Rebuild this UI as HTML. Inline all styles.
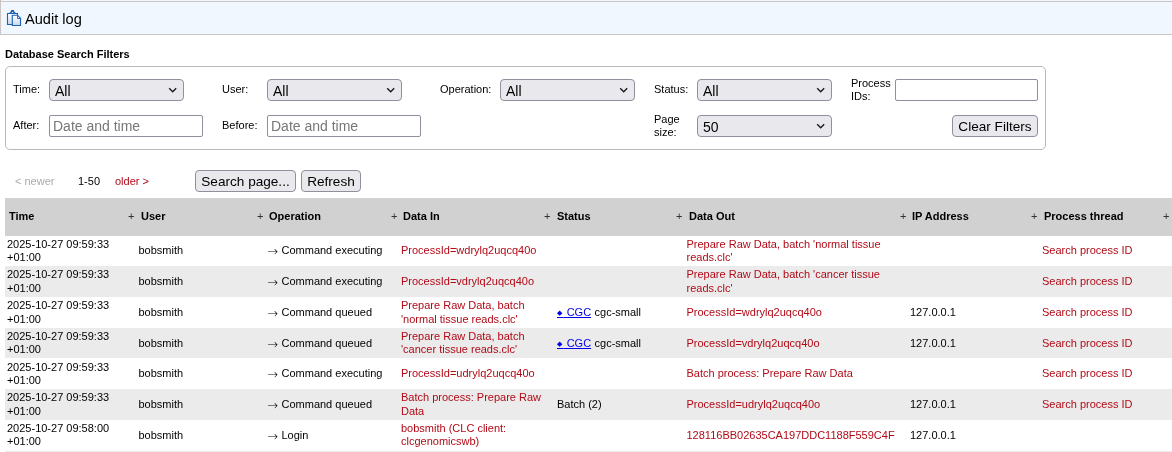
<!DOCTYPE html>
<html><head><meta charset="utf-8"><title>Audit log</title>
<style>
html,body{margin:0;padding:0;background:#fff;}
body{will-change:transform;width:1172px;height:452px;position:relative;overflow:hidden;font-family:"Liberation Sans",sans-serif;font-size:11px;color:#000;}
.abs{position:absolute;white-space:nowrap;}
#hdr0{position:absolute;left:0;top:0;width:1172px;height:2px;background:#f0f7fe;border-left:1px solid #bbb;box-sizing:border-box;}
#hdr{position:absolute;left:0;top:1px;width:1172px;height:32px;border:1px solid #cdc4c4;border-right:none;background:#f0f7fe;box-sizing:content-box;}
#title{left:25px;top:11px;font-size:14.6px;line-height:17px;}
#dsf{left:5px;top:48px;font-weight:bold;font-size:11px;line-height:13px;}
#fs{position:absolute;left:5px;top:66px;width:1041px;height:84px;border:1px solid #bababa;border-radius:5px;box-sizing:border-box;}
.lbl{position:absolute;font-size:11px;line-height:13px;}
.sel{position:absolute;height:22px;width:135px;box-sizing:border-box;border:1px solid #8f8f9d;border-radius:4px;background:#e9e9ed;font-size:14px;line-height:20px;padding-left:5px;padding-top:1px;}
.sel svg{position:absolute;right:5px;top:6.9px;}
.inp{position:absolute;height:22px;width:154px;box-sizing:border-box;border:1px solid #8f8f9d;border-radius:2px;background:#fff;font-size:14px;line-height:20px;padding-left:3px;color:#777;}
.btn{position:absolute;height:22px;box-sizing:border-box;border:1px solid #8f8f9d;border-radius:4px;background:#e9e9ed;font-size:13.6px;line-height:21px;text-align:center;}
#thead{position:absolute;left:5px;top:198px;width:1167px;height:38px;background:#d1d1d1;}
.th{position:absolute;top:210px;font-weight:bold;font-size:11px;line-height:13px;}
.plus{position:absolute;top:210px;font-size:11px;line-height:13px;color:#333;}
.row{position:absolute;left:5px;width:1167px;}
.g{background:#ebebeb;}
.c{position:absolute;font-size:11px;line-height:13px;white-space:nowrap;}
.r{color:#b10a17;}
.ar{font-family:"DejaVu Sans Light","DejaVu Sans",sans-serif;font-weight:200;font-size:13px;line-height:13px;display:inline-block;width:14.5px;vertical-align:top;position:relative;top:0.5px;}
a{color:#0000ee;margin-right:0.4px;text-decoration-skip-ink:none;}
.ic{font-family:"DejaVu Sans",sans-serif;font-size:7px;line-height:7px;letter-spacing:1.2px;vertical-align:0.7px;}
</style></head><body>
<div id="hdr0"></div><div id="hdr"></div>
<svg class="abs" style="left:0;top:0" width="30" height="30" viewBox="0 0 30 30">
<defs><linearGradient id="gr" x1="0" y1="0" x2="0" y2="1"><stop offset="0" stop-color="#ffffff"/><stop offset="1" stop-color="#cbd9ea"/></linearGradient></defs>
<path d="M7.5 13.5h10v11h-10z" fill="url(#gr)" stroke="#1c62b4" stroke-width="1.1"/>
<path d="M8.9 13.3 L11 11.2 L11 10.1 L14 10.1 L14 11.2 L16.1 13.3z" fill="#1c62b4"/>
<path d="M11.5 13 L12.5 11.4 L13.5 13z" fill="#dfe7f2"/>
<path d="M12.3 15.2h5.2l3 3v7.3h-8.2z" fill="url(#gr)" stroke="#1c62b4" stroke-width="1.1"/>
<path d="M17.5 15.2v3.3h3" fill="none" stroke="#1c62b4" stroke-width="0.9"/>
</svg>
<div id="title" class="abs">Audit log</div>
<div id="dsf" class="abs">Database Search Filters</div>
<div id="fs"></div>

<div class="lbl" style="left:13px;top:83px">Time:</div>
<div class="sel" style="left:49px;top:79px">All<svg width="10" height="7" viewBox="0 0 10 7"><path d="M1.2 1.2l3.5 3.6L8.2 1.2" fill="none" stroke="#1a1a1a" stroke-width="1.4"/></svg></div>
<div class="lbl" style="left:222px;top:83px">User:</div>
<div class="sel" style="left:267px;top:79px">All<svg width="10" height="7" viewBox="0 0 10 7"><path d="M1.2 1.2l3.5 3.6L8.2 1.2" fill="none" stroke="#1a1a1a" stroke-width="1.4"/></svg></div>
<div class="lbl" style="left:440px;top:83px">Operation:</div>
<div class="sel" style="left:500px;top:79px">All<svg width="10" height="7" viewBox="0 0 10 7"><path d="M1.2 1.2l3.5 3.6L8.2 1.2" fill="none" stroke="#1a1a1a" stroke-width="1.4"/></svg></div>
<div class="lbl" style="left:654px;top:83px">Status:</div>
<div class="sel" style="left:697px;top:79px">All<svg width="10" height="7" viewBox="0 0 10 7"><path d="M1.2 1.2l3.5 3.6L8.2 1.2" fill="none" stroke="#1a1a1a" stroke-width="1.4"/></svg></div>
<div class="lbl" style="left:851px;top:77px">Process<br>IDs:</div>
<div class="inp" style="left:895px;top:79px;width:143px"></div>

<div class="lbl" style="left:13px;top:119px">After:</div>
<div class="inp" style="left:49px;top:115px">Date and time</div>
<div class="lbl" style="left:222px;top:119px">Before:</div>
<div class="inp" style="left:267px;top:115px">Date and time</div>
<div class="lbl" style="left:654px;top:113px">Page<br>size:</div>
<div class="sel" style="left:697px;top:115px">50<svg width="10" height="7" viewBox="0 0 10 7"><path d="M1.2 1.2l3.5 3.6L8.2 1.2" fill="none" stroke="#1a1a1a" stroke-width="1.4"/></svg></div>
<div class="btn" style="left:952px;top:115px;width:86px">Clear Filters</div>

<div class="lbl" style="left:15px;top:175px;color:#aaa">&lt; newer</div>
<div class="lbl" style="left:78px;top:175px">1-50</div>
<div class="lbl r" style="left:115px;top:175px">older &gt;</div>
<div class="btn" style="left:195px;top:170px;width:101px">Search page...</div>
<div class="btn" style="left:301px;top:170px;width:60px">Refresh</div>

<div id="thead"></div>
<div class="th" style="left:9px">Time</div>
<div class="plus" style="left:128px">+</div><div class="th" style="left:141px">User</div>
<div class="plus" style="left:257px">+</div><div class="th" style="left:269px">Operation</div>
<div class="plus" style="left:391px">+</div><div class="th" style="left:403px">Data In</div>
<div class="plus" style="left:544px">+</div><div class="th" style="left:557px">Status</div>
<div class="plus" style="left:676px">+</div><div class="th" style="left:689px">Data Out</div>
<div class="plus" style="left:900px">+</div><div class="th" style="left:912px">IP Address</div>
<div class="plus" style="left:1031px">+</div><div class="th" style="left:1044px">Process thread</div>
<div class="plus" style="left:1163px">+</div>

<div class="row" style="top:236px;height:30px"></div>
<div class="row g" style="top:266px;height:31px"></div>
<div class="row" style="top:297px;height:31px"></div>
<div class="row g" style="top:328px;height:30px"></div>
<div class="row" style="top:358px;height:31px"></div>
<div class="row g" style="top:389px;height:31px"></div>
<div class="row" style="top:420px;height:31px"></div>
<div class="row g" style="top:451px;height:1px"></div>

<!-- row 1 -->
<div class="c" style="left:7px;top:238px">2025-10-27 09:59:33</div><div class="c" style="left:7px;top:251px">+01:00</div>
<div class="c" style="left:138.5px;top:244px">bobsmith</div>
<div class="c" style="left:267px;top:244px"><span class="ar">→</span>Command executing</div>
<div class="c r" style="left:401px;top:244px">ProcessId=wdrylq2uqcq40o</div>
<div class="c r" style="left:686.5px;top:238px">Prepare Raw Data, batch 'normal tissue</div><div class="c r" style="left:686.5px;top:251px">reads.clc'</div>
<div class="c r" style="left:1042px;top:244px">Search process ID</div>
<!-- row 2 -->
<div class="c" style="left:7px;top:268px">2025-10-27 09:59:33</div><div class="c" style="left:7px;top:282px">+01:00</div>
<div class="c" style="left:138.5px;top:275px">bobsmith</div>
<div class="c" style="left:267px;top:275px"><span class="ar">→</span>Command executing</div>
<div class="c r" style="left:401px;top:275px">ProcessId=vdrylq2uqcq40o</div>
<div class="c r" style="left:686.5px;top:268px">Prepare Raw Data, batch 'cancer tissue</div><div class="c r" style="left:686.5px;top:282px">reads.clc'</div>
<div class="c r" style="left:1042px;top:275px">Search process ID</div>
<!-- row 3 -->
<div class="c" style="left:7px;top:299px">2025-10-27 09:59:33</div><div class="c" style="left:7px;top:313px">+01:00</div>
<div class="c" style="left:138.5px;top:306px">bobsmith</div>
<div class="c" style="left:267px;top:306px"><span class="ar">→</span>Command queued</div>
<div class="c r" style="left:401px;top:299px">Prepare Raw Data, batch</div><div class="c r" style="left:401px;top:313px">'normal tissue reads.clc'</div>
<div class="c" style="left:557px;top:306px"><a href="#"><span class="ic">◆</span> CGC</a> cgc-small</div>
<div class="c r" style="left:686.5px;top:306px">ProcessId=wdrylq2uqcq40o</div>
<div class="c" style="left:910px;top:306px">127.0.0.1</div>
<div class="c r" style="left:1042px;top:306px">Search process ID</div>
<!-- row 4 -->
<div class="c" style="left:7px;top:330px">2025-10-27 09:59:33</div><div class="c" style="left:7px;top:343px">+01:00</div>
<div class="c" style="left:138.5px;top:337px">bobsmith</div>
<div class="c" style="left:267px;top:337px"><span class="ar">→</span>Command queued</div>
<div class="c r" style="left:401px;top:330px">Prepare Raw Data, batch</div><div class="c r" style="left:401px;top:343px">'cancer tissue reads.clc'</div>
<div class="c" style="left:557px;top:337px"><a href="#"><span class="ic">◆</span> CGC</a> cgc-small</div>
<div class="c r" style="left:686.5px;top:337px">ProcessId=vdrylq2uqcq40o</div>
<div class="c" style="left:910px;top:337px">127.0.0.1</div>
<div class="c r" style="left:1042px;top:337px">Search process ID</div>
<!-- row 5 -->
<div class="c" style="left:7px;top:361px">2025-10-27 09:59:33</div><div class="c" style="left:7px;top:374px">+01:00</div>
<div class="c" style="left:138.5px;top:367px">bobsmith</div>
<div class="c" style="left:267px;top:367px"><span class="ar">→</span>Command executing</div>
<div class="c r" style="left:401px;top:367px">ProcessId=udrylq2uqcq40o</div>
<div class="c r" style="left:686.5px;top:367px">Batch process: Prepare Raw Data</div>
<div class="c r" style="left:1042px;top:367px">Search process ID</div>
<!-- row 6 -->
<div class="c" style="left:7px;top:391px">2025-10-27 09:59:33</div><div class="c" style="left:7px;top:405px">+01:00</div>
<div class="c" style="left:138.5px;top:398px">bobsmith</div>
<div class="c" style="left:267px;top:398px"><span class="ar">→</span>Command queued</div>
<div class="c r" style="left:401px;top:391px">Batch process: Prepare Raw</div><div class="c r" style="left:401px;top:405px">Data</div>
<div class="c" style="left:557px;top:398px">Batch (2)</div>
<div class="c r" style="left:686.5px;top:398px">ProcessId=udrylq2uqcq40o</div>
<div class="c" style="left:910px;top:398px">127.0.0.1</div>
<div class="c r" style="left:1042px;top:398px">Search process ID</div>
<!-- row 7 -->
<div class="c" style="left:7px;top:422px">2025-10-27 09:58:00</div><div class="c" style="left:7px;top:435px">+01:00</div>
<div class="c" style="left:138.5px;top:429px">bobsmith</div>
<div class="c" style="left:267px;top:429px"><span class="ar">→</span>Login</div>
<div class="c r" style="left:401px;top:422px">bobsmith (CLC client:</div><div class="c r" style="left:401px;top:435px">clcgenomicswb)</div>
<div class="c r" style="left:686.5px;top:429px">128116BB02635CA197DDC1188F559C4F</div>
<div class="c" style="left:910px;top:429px">127.0.0.1</div>
</body></html>
